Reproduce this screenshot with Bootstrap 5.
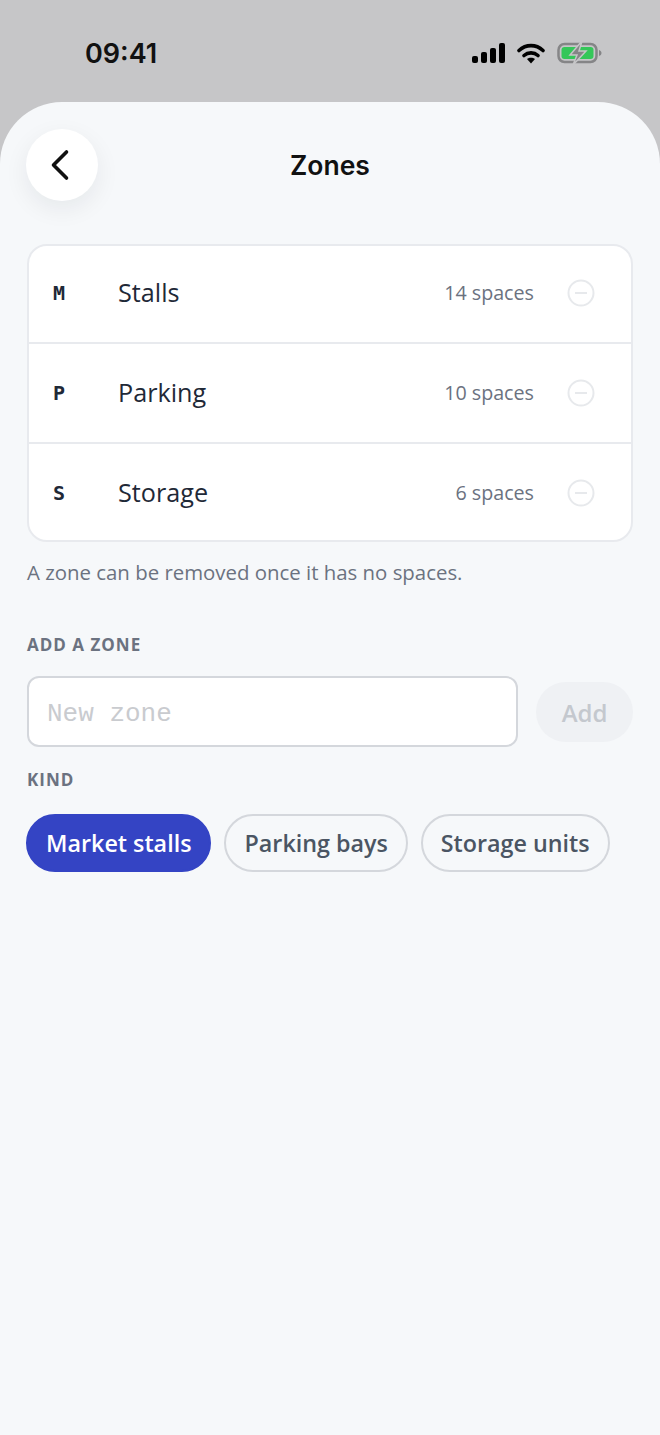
<!DOCTYPE html>
<html>
<head>
  <meta charset="UTF-8">
  <title>Zones</title>
  <link href="https://cdn.jsdelivr.net/npm/bootstrap@5.3.2/dist/css/bootstrap.min.css" rel="stylesheet">
  <style>
    html, body { height: 100%; }
    body { background: #c6c6c8; font-family: "Open Sans", "Noto Sans", "Liberation Sans", sans-serif; overflow: hidden; }
    .status-bar { height: 102px; padding: 0 58px 0 85px; }
    .status-time { font-family: Inter, sans-serif; font-weight: 600; font-size: 27px; color: #111; margin-top: 38px; line-height: 32px; }
    .status-icons { margin-top: 41px; height: 24px; gap: 12px; }
    .sheet { background: #f6f8fa; height: 1333px; border-radius: 62px 62px 0 0; padding: 27px 27px 0 27px; }
    .top-row { height: 72px; }
    .back-btn { width: 72px; height: 72px; background: #fff; border: 0; border-radius: 50%; box-shadow: 0 8px 24px rgba(17, 24, 39, .07); margin-left: -1px; padding: 0; }
    .page-title { font-family: Inter, sans-serif; font-weight: 600; font-size: 26.5px; color: #111; margin: 0; left: 0; right: 0; line-height: 72px; pointer-events: none; }
    .zone-card { margin-top: 43px; background: #fff; border: 2px solid #e8eaee; border-radius: 20px; overflow: hidden; }
    .zone-row { height: 100px; padding: 0 36px 0 24px; }
    .zone-row + .zone-row { border-top: 2px solid #e8eaee; }
    .zone-row:first-child { height: 96px; padding-bottom: 2px; }
    .zone-row:last-child { height: 98px; padding-top: 1px; }
    .zone-key { width: 65px; font-family: "DejaVu Sans Mono", monospace; font-size: 20px; font-weight: 700; color: #1f2937; }
    .zone-name { font-size: 25.2px; color: #1f2937; }
    .zone-count { font-size: 19.7px; color: #6b7280; margin-right: 33px; }
    .zone-note { font-size: 20.4px; color: #6b7280; margin: 16px 0 0; line-height: 28px; }
    .field-label { font-size: 17px; font-weight: 700; letter-spacing: 1px; color: #6b7280; line-height: 22px; }
    .add-label { margin-top: 48px; }
    .add-row { margin-top: 20px; height: 71px; }
    .zone-input { width: 492px; height: 71px; border: 2px solid #d4d7dc; border-radius: 12px; background: #fff; padding: 4px 18px 0; font-family: "Liberation Mono", monospace; font-size: 26px; color: #1f2937; box-shadow: none; }
    .zone-input::placeholder { color: #c9cbcf; opacity: 1; }
    .add-btn.btn:disabled { width: 97px; height: 60px; border-radius: 30px; border: 0; background: #eff1f4; color: #c4c8ce; font-size: 24px; font-weight: 600; margin-left: 18px; padding: 2px 0 0; opacity: 1; }
    .kind-label { margin-top: 22px; }
    .kind-row { margin-top: 23px; margin-left: -1px; gap: 13px; }
    .kind-chip { height: 58px; border-radius: 29px; border: 2px solid #d4d7dc; background: transparent; color: #4b5563; font-size: 23.3px; font-weight: 600; padding: 1px 18px 0; white-space: nowrap; }
    .kind-chip.active { background: #3444c4; border-color: #3444c4; color: #fff; }
  </style>
</head>
<body>
  <div class="status-bar d-flex justify-content-between align-items-start">
    <div class="status-time">09:41</div>
    <div class="status-icons d-flex align-items-center">
      <svg width="33" height="20" viewBox="0 0 33 20"><rect x="0" y="13" width="6" height="7" rx="2" fill="#000"/><rect x="9" y="9" width="6" height="11" rx="2" fill="#000"/><rect x="18" y="5" width="6" height="15" rx="2" fill="#000"/><rect x="27" y="0" width="6" height="20" rx="2" fill="#000"/></svg>
      <svg width="28" height="21" viewBox="0 0 28 21" fill="none" stroke="#000" stroke-width="3.600" stroke-linecap="round"><path d="M2 7.500C9 1 19 1 26 7.500"/><path d="M7 12.500C11 9 17 9 21 12.500"/><path d="M14 20.500l-4-4.500c2.200-1.800 5.800-1.800 8 0z" fill="#000" stroke="none"/></svg>
      <svg width="45" height="26" viewBox="0 0 45 26"><rect x="1.500" y="4" width="38" height="18" rx="6" fill="none" stroke="#858587" stroke-width="2.500"/><rect x="4.500" y="7" width="32" height="12" rx="3" fill="#34c759"/><path d="M42 10v6c1.500-.5 2.500-1.500 2.500-3s-1-2.500-2.500-3z" fill="#858587"/><path d="M25 1L13 15h7l-4 10 13-14h-7z" fill="#858587" stroke="#c6c6c8" stroke-width="1.500"/></svg>
    </div>
  </div>

  <div class="sheet">
    <div class="top-row position-relative d-flex align-items-center">
      <button class="back-btn d-flex align-items-center justify-content-center" type="button" aria-label="Back">
        <svg width="24" height="32" viewBox="0 0 24 32" fill="none" stroke="#111" stroke-width="3.600" stroke-linecap="round" stroke-linejoin="round"><path d="M16.500 3L3.500 16l13 13"/></svg>
      </button>
      <h1 class="page-title position-absolute text-center">Zones</h1>
    </div>

    <div class="zone-card">
      <div class="zone-row d-flex align-items-center">
        <span class="zone-key">M</span><span class="zone-name flex-grow-1">Stalls</span><span class="zone-count">14 spaces</span>
        <svg width="28" height="28" viewBox="0 0 28 28" fill="none" stroke="#e7e9ec" stroke-width="2"><circle cx="14" cy="14" r="12.500"/><path d="M8 14h12"/></svg>
      </div>
      <div class="zone-row d-flex align-items-center">
        <span class="zone-key">P</span><span class="zone-name flex-grow-1">Parking</span><span class="zone-count">10 spaces</span>
        <svg width="28" height="28" viewBox="0 0 28 28" fill="none" stroke="#e7e9ec" stroke-width="2"><circle cx="14" cy="14" r="12.500"/><path d="M8 14h12"/></svg>
      </div>
      <div class="zone-row d-flex align-items-center">
        <span class="zone-key">S</span><span class="zone-name flex-grow-1">Storage</span><span class="zone-count">6 spaces</span>
        <svg width="28" height="28" viewBox="0 0 28 28" fill="none" stroke="#e7e9ec" stroke-width="2"><circle cx="14" cy="14" r="12.500"/><path d="M8 14h12"/></svg>
      </div>
    </div>
    <p class="zone-note">A zone can be removed once it has no spaces.</p>

    <div class="field-label add-label">ADD A ZONE</div>
    <div class="add-row d-flex align-items-center">
      <input class="zone-input form-control" type="text" placeholder="New zone">
      <button class="add-btn btn" type="button" disabled>Add</button>
    </div>

    <div class="field-label kind-label">KIND</div>
    <div class="kind-row d-flex">
      <button class="kind-chip active" type="button">Market stalls</button>
      <button class="kind-chip" type="button">Parking bays</button>
      <button class="kind-chip" type="button">Storage units</button>
    </div>
  </div>
</body>
</html>
